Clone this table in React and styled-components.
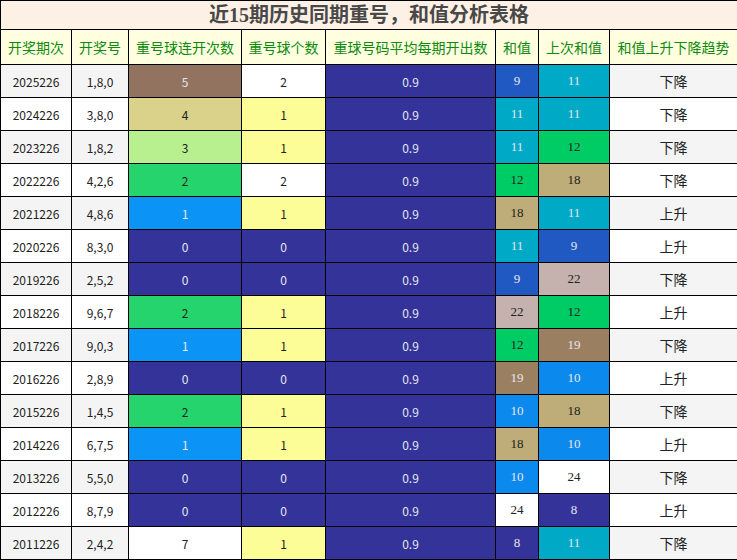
import React from "react";
import styled, { createGlobalStyle } from "styled-components";

const Global = createGlobalStyle`
  body {
    margin: 0;
    background: #ffffff;
  }
`;

const Table = styled.table`
  width: 737px;
  border-collapse: collapse;
  table-layout: fixed;
  font-family: "Noto Sans CJK SC", sans-serif;
`;

const TitleCell = styled.th`
  height: 28px;
  padding: 0;
  border: 1px solid #000;
  background: #fdf0e4;
  color: #484848;
  font-size: 20px;
  font-weight: bold;
  font-family: "Liberation Serif", "Noto Sans CJK SC", serif;
  line-height: 26px;
  text-align: center;
`;

const HeadRow = styled.tr`
  height: 35px;
`;

const HeadCell = styled.th`
  padding: 0;
  border: 1px solid #000;
  background: #ffffe0;
  color: #0e8a0e;
  font-size: 14px;
  font-weight: normal;
  text-align: center;
  white-space: nowrap;
`;

const Row = styled.tr`
  height: 33px;
`;

const Cell = styled.td`
  padding: 0;
  border: 1px solid #000;
  text-align: center;
  font-size: ${(p) => (p.$cjk ? "14px" : p.$serif ? "13px" : "12px")};
  font-family: ${(p) =>
    p.$serif ? '"Liberation Serif", serif' : '"Noto Sans CJK SC", sans-serif'};
  background: ${(p) => p.$bg || "#fff"};
  color: ${(p) => (p.$light ? "#e6e6ee" : "#222")};
`;

const NAVY = "#333399";

const runColors = {
  0: [NAVY, true],
  1: ["#0b93f5", true],
  2: ["#26d46e", false],
  3: ["#b8f08f", false],
  4: ["#dad18b", false],
  5: ["#917360", true],
  7: ["#ffffff", false],
};

const countColors = {
  0: [NAVY, true],
  1: ["#fdfd98", false],
  2: ["#ffffff", false],
};

const sumColors = {
  8: [NAVY, true],
  9: ["#2159c3", true],
  10: ["#0b89ec", true],
  11: ["#00aac6", true],
  12: ["#00cc66", false],
  18: ["#bead78", false],
  19: ["#9b7f61", true],
  22: ["#c5b1ad", false],
  24: ["#ffffff", false],
};

const rows = [
  ["2025226", "1,8,0", 5, 2, 9, 11, "下降"],
  ["2024226", "3,8,0", 4, 1, 11, 11, "下降"],
  ["2023226", "1,8,2", 3, 1, 11, 12, "下降"],
  ["2022226", "4,2,6", 2, 2, 12, 18, "下降"],
  ["2021226", "4,8,6", 1, 1, 18, 11, "上升"],
  ["2020226", "8,3,0", 0, 0, 11, 9, "上升"],
  ["2019226", "2,5,2", 0, 0, 9, 22, "下降"],
  ["2018226", "9,6,7", 2, 1, 22, 12, "上升"],
  ["2017226", "9,0,3", 1, 1, 12, 19, "下降"],
  ["2016226", "2,8,9", 0, 0, 19, 10, "上升"],
  ["2015226", "1,4,5", 2, 1, 10, 18, "下降"],
  ["2014226", "6,7,5", 1, 1, 18, 10, "上升"],
  ["2013226", "5,5,0", 0, 0, 10, 24, "下降"],
  ["2012226", "8,7,9", 0, 0, 24, 8, "上升"],
  ["2011226", "2,4,2", 7, 1, 8, 11, "下降"],
];

const headers = [
  "开奖期次",
  "开奖号",
  "重号球连开次数",
  "重号球个数",
  "重球号码平均每期开出数",
  "和值",
  "上次和值",
  "和值上升下降趋势",
];

const widths = [71, 57, 113, 84, 170, 43, 71, 128];

function App() {
  return (
    <>
      <Global />
      <Table>
        <colgroup>
          {widths.map((w, i) => (
            <col key={i} style={{ width: w }} />
          ))}
        </colgroup>
        <thead>
          <tr>
            <TitleCell colSpan={8}>近15期历史同期重号，和值分析表格</TitleCell>
          </tr>
          <HeadRow>
            {headers.map((h) => (
              <HeadCell key={h}>{h}</HeadCell>
            ))}
          </HeadRow>
        </thead>
        <tbody>
          {rows.map((r, i) => {
            const stripe = i % 2 === 0 ? "#f4f4f4" : "#ffffff";
            const [runBg, runLight] = runColors[r[2]];
            const [cntBg, cntLight] = countColors[r[3]];
            const [sumBg, sumLight] = sumColors[r[4]];
            const [lastBg, lastLight] = sumColors[r[5]];
            return (
              <Row key={r[0]}>
                <Cell $bg={stripe}>{r[0]}</Cell>
                <Cell $bg={stripe}>{r[1]}</Cell>
                <Cell $bg={runBg} $light={runLight}>{r[2]}</Cell>
                <Cell $bg={cntBg} $light={cntLight}>{r[3]}</Cell>
                <Cell $bg={NAVY} $light>0.9</Cell>
                <Cell $bg={sumBg} $light={sumLight} $serif>{r[4]}</Cell>
                <Cell $bg={lastBg} $light={lastLight} $serif>{r[5]}</Cell>
                <Cell $bg={stripe} $cjk>{r[6]}</Cell>
              </Row>
            );
          })}
        </tbody>
      </Table>
    </>
  );
}

export default App;
